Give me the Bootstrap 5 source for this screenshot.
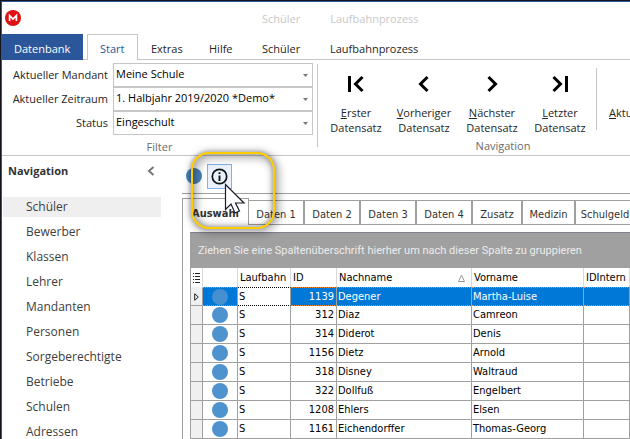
<!DOCTYPE html>
<html lang="de">
<head>
<meta charset="utf-8">
<meta name="viewport" content="width=device-width, initial-scale=1">
<title>Schüler</title>
<link href="https://cdn.jsdelivr.net/npm/bootstrap@5.3.0/dist/css/bootstrap.min.css" rel="stylesheet">
<style>
  :root { --accent: #2b579a; --rule: #c6c6c6; --edge: #a0a0a0; }
  body { font: 11px/15px "Open Sans", "Noto Sans", sans-serif; color: #262626; background: #fff; }
  a { color: inherit; text-decoration: none; }
  .app { border-left: 1px solid #14141c; border-top: 1px solid #14141c; }
  .app-inner { border-left: 1px solid var(--accent); border-top: 1px solid var(--accent); }
  .titlebar { height: 32px; color: #c8c8c8; padding-top: 8px; padding-left: 3px; line-height: 18px; }
  .title-a { margin-left: 241px; }
  .title-b { margin-left: 30px; }
  /* ribbon tabs */
  .ribbon-tabs { height: 26px; border-bottom: 1px solid var(--rule); }
  .ribbon-tabs .nav-link { color: #262626; padding: 7px 13px; height: 26px; width: 54px; white-space: nowrap; }
  .ribbon-tabs .file-tab { background: var(--accent); color: #fff; width: 81px; margin-right: 4px; padding: 7px 12px; }
  .ribbon-tabs .nav-link.active { color: var(--accent); background: #fff; border: 1px solid var(--rule); border-bottom: 0; width: 51px; padding: 6px 12px; }
  .ribbon-tabs .wide-tab { width: 68px; padding: 7px 12px; }
  /* ribbon body */
  .ribbon { height: 96px; border-bottom: 1px solid var(--rule); }
  .filter-group { width: 315px; padding: 3px 4px 0 0; }
  .filter-row { height: 24px; gap: 5px; }
  .filter-row label { padding-bottom: 2px; }
  .filter-row .form-select { --bs-form-select-bg-img: none; width: 200px; height: 24px; padding: 0 20px 2px 2px; font-size: 11px; line-height: 18px; color: #000; border: 1px solid var(--rule); border-radius: 0;
    background: #fff url("data:image/svg+xml,%3Csvg xmlns='http://www.w3.org/2000/svg' viewBox='0 0 5 3'%3E%3Cpath d='M0 0h5L2.500 3z' fill='%23777'/%3E%3C/svg%3E") no-repeat right 4px center / 5px 3px; }
  .group-caption { color: #6b6b6b; line-height: 16px; }
  .divider { width: 1px; background: var(--rule); flex: none; }
  .command-group { width: 370px; padding-top: 8px; }
  .command-row { height: 70px; }
  .nav-buttons { padding: 6px 2px 0 4px; }
  .cmd { width: 68px; padding: 0; border: 0; border-radius: 0; font-size: 11px; line-height: 15px; color: #262626; flex: none; }
  .cmd svg { display: block; margin: 0 auto 11px; }
  .cmd.refresh { margin-left: 12px; padding-top: 37px; text-align: left; }
  /* sidebar */
  .sidebar { width: 180px; padding-top: 7px; flex: none; font-size: 12px; color: #404040; }
  .sidebar h2 { font-size: 11px; line-height: 16px; font-weight: 700; margin: 0; color: #333; }
  .side-head { padding: 0 27px 18px 6px; }
  .sidebar .list-group-item { border: 0; border-radius: 0; height: 20px; margin: 0 21px 5px 1px; padding: 2px 0 2px 23px; line-height: 16px; color: #404040; background: transparent; }
  .sidebar .list-group-item.active { background: #efefef; }
  /* main area */
  .workspace { min-width: 0; }
  .tools { height: 38px; border-bottom: 1px solid var(--edge); padding: 8px 0 0 4px; }
  .dot { display: block; width: 16px; height: 16px; border-radius: 50%; background: #4e93cd; margin: 0 auto; }
  .tool-dot { background: #4683b7; margin: 0; }
  .info-btn { width: 25px; height: 25px; border: 1px solid #7fb0e6; background: #e9f2fc; padding: 0; border-radius: 0; margin-left: 5px; line-height: 0; }
  .page-tabs { height: 27px; margin-top: 4px; font: 11px/13px "DejaVu Sans Condensed", "DejaVu Sans", sans-serif; }
  .page-tabs .nav-link { flex: none; height: 25px; margin-top: 2px; padding: 7px 0 0; width: 56px; text-align: center; color: #333; border: 1px solid var(--edge); border-left-width: 0; border-right-width: 2px; white-space: nowrap; }
  .page-tabs .nav-link.active { width: 67px; height: 27px; margin: 0; padding: 8px 0 0 9px; text-align: left; background: #fff; border-left-width: 1px; border-right-width: 1px; border-bottom: 0; font-weight: 700; }
  .page-tabs .w-50px { width: 50px; }
  .page-tabs .w-53px { width: 53px; }
  .page-tabs .w-60px { width: 60px; }
  .sheet { border-left: 1px solid var(--edge); padding: 7px 0 0 7px; }
  .grid-box { border-left: 1px solid var(--edge); border-top: 1px solid #808090; font: 11px/14px "DejaVu Sans Condensed", "DejaVu Sans", sans-serif; color: #000; }
  .group-panel { height: 35px; background: var(--edge); color: #ececec; padding: 11px 7px; white-space: nowrap; font-family: Roboto, sans-serif; }
  .records { table-layout: fixed; width: 100%; border-collapse: separate; border-spacing: 0; white-space: nowrap; }
  .records th { height: 19px; padding: 0 2px; font-weight: 400; border-right: 1px solid #d8d8d8; }
  .records td { height: 19px; padding: 0 1px; border-right: 1px solid var(--edge); border-bottom: 1px solid var(--edge); }
  .records td:first-child { background: #f0f0f0; }
  .records .num { text-align: right; padding-right: 2px; }
  .records tr.current td { background: #0078d7; color: #fff; border-bottom: 1px dotted #f28728; border-top: 1px dotted #f28728; }
  .records tr.current td:first-child { background: #f0f0f0; border-top-color: transparent; border-bottom: 1px solid var(--edge); line-height: 0; }
  .records tr.current td.focused { background: #fff; color: #000; border-top-color: #000; border-bottom-color: #000; }
  .records tr.current .dot { background: #4590d0; }
  /* highlight ring and pointer lie over the page */
  .ring { position: absolute; left: 190px; top: 151px; width: 84px; height: 77px; border: 2px solid #fc0; border-radius: 18px; filter: drop-shadow(0 0 2px rgba(0,0,0,.45)) drop-shadow(2px 2px 4px rgba(0,0,0,.8)); pointer-events: none; }
  .pointer { position: absolute; left: 223px; top: 182px; pointer-events: none; }
</style>
<script src="https://cdn.jsdelivr.net/npm/bootstrap@5.3.0/dist/js/bootstrap.bundle.min.js"></script>
</head>
<body>
<div class="app vh-100 overflow-hidden position-relative">
<div class="app-inner h-100 d-flex flex-column">
  <header class="titlebar d-flex align-items-start flex-shrink-0">
    <svg width="16" height="16" viewBox="0 0 16 16" aria-hidden="true"><circle cx="8" cy="8" r="8" fill="#e01014"/><path d="M4.600 11V5.600L8 9l3.400-3.400V11" fill="none" stroke="#fff" stroke-width="1.700"/></svg>
    <span class="title-a">Schüler</span><span class="title-b">Laufbahnprozess</span>
  </header>
  <nav class="ribbon-tabs nav flex-nowrap flex-shrink-0">
    <a class="nav-link file-tab" href="#">Datenbank</a>
    <a class="nav-link active" href="#">Start</a>
    <a class="nav-link" href="#">Extras</a>
    <a class="nav-link ms-1" href="#">Hilfe</a>
    <a class="nav-link wide-tab" href="#">Schüler</a>
    <a class="nav-link wide-tab" href="#">Laufbahnprozess</a>
  </nav>
  <section class="ribbon d-flex flex-shrink-0">
    <div class="filter-group flex-shrink-0">
      <div class="filter-row d-flex align-items-center justify-content-end"><label for="mandant">Aktueller Mandant</label><select class="form-select" id="mandant"><option>Meine Schule</option></select></div>
      <div class="filter-row d-flex align-items-center justify-content-end"><label for="zeitraum">Aktueller Zeitraum</label><select class="form-select" id="zeitraum"><option>1. Halbjahr 2019/2020 *Demo*</option></select></div>
      <div class="filter-row d-flex align-items-center justify-content-end"><label for="status">Status</label><select class="form-select" id="status"><option>Eingeschult</option></select></div>
      <div class="group-caption text-center mt-1 ps-1">Filter</div>
    </div>
    <div class="divider mt-1 mb-2"></div>
    <div class="command-group flex-shrink-0">
      <div class="command-row d-flex align-items-start">
        <div class="nav-buttons d-flex flex-shrink-0">
          <button type="button" class="btn cmd"><svg width="20" height="20" viewBox="0 0 20 20"><path d="M3.500 2v16M16.500 3l-7 7 7 7" fill="none" stroke="#000" stroke-width="3"/></svg><u>E</u>rster<br>Datensatz</button>
          <button type="button" class="btn cmd"><svg width="20" height="20" viewBox="0 0 20 20"><path d="M13.500 3l-7 7 7 7" fill="none" stroke="#000" stroke-width="3"/></svg><u>V</u>orheriger<br>Datensatz</button>
          <button type="button" class="btn cmd"><svg width="20" height="20" viewBox="0 0 20 20"><path d="M6.500 3l7 7-7 7" fill="none" stroke="#000" stroke-width="3"/></svg><u>N</u>ächster<br>Datensatz</button>
          <button type="button" class="btn cmd"><svg width="20" height="20" viewBox="0 0 20 20"><path d="M16.500 2v16M3.500 3l7 7-7 7" fill="none" stroke="#000" stroke-width="3"/></svg><u>L</u>etzter<br>Datensatz</button>
        </div>
        <div class="divider align-self-stretch mb-2"></div>
        <button type="button" class="btn cmd refresh"><u>A</u>ktualisieren</button>
      </div>
      <div class="group-caption text-center">Navigation</div>
    </div>
  </section>
  <div class="d-flex flex-grow-1">
    <aside class="sidebar">
      <div class="side-head d-flex justify-content-between align-items-center"><h2>Navigation</h2><svg width="8" height="10" viewBox="0 0 8 10"><path d="M6.500 1L2 5l4.500 4" fill="none" stroke="#777" stroke-width="2"/></svg></div>
      <div class="list-group">
        <a class="list-group-item active" href="#">Schüler</a>
        <a class="list-group-item" href="#">Bewerber</a>
        <a class="list-group-item" href="#">Klassen</a>
        <a class="list-group-item" href="#">Lehrer</a>
        <a class="list-group-item" href="#">Mandanten</a>
        <a class="list-group-item" href="#">Personen</a>
        <a class="list-group-item" href="#">Sorgeberechtigte</a>
        <a class="list-group-item" href="#">Betriebe</a>
        <a class="list-group-item" href="#">Schulen</a>
        <a class="list-group-item" href="#">Adressen</a>
      </div>
    </aside>
    <main class="workspace flex-grow-1 d-flex flex-column">
      <div class="tools d-flex flex-shrink-0">
        <span class="dot tool-dot mt-1"></span>
        <button type="button" class="btn info-btn" aria-label="Info"><svg width="17" height="17" viewBox="0 0 17 17"><circle cx="8.500" cy="8.500" r="7.200" fill="none" stroke="#111" stroke-width="1.700"/><path d="M8.500 7.500V13M8.500 4.200v1.900" stroke="#111" stroke-width="1.900"/></svg></button>
      </div>
      <nav class="page-tabs nav flex-nowrap flex-shrink-0">
        <a class="nav-link active" href="#">Auswahl</a>
        <a class="nav-link" href="#">Daten 1</a>
        <a class="nav-link" href="#">Daten 2</a>
        <a class="nav-link" href="#">Daten 3</a>
        <a class="nav-link" href="#">Daten 4</a>
        <a class="nav-link w-50px" href="#">Zusatz</a>
        <a class="nav-link w-53px" href="#">Medizin</a>
        <a class="nav-link w-60px" href="#">Schulgeld</a>
      </nav>
      <div class="sheet flex-grow-1">
        <div class="grid-box">
          <div class="group-panel">Ziehen Sie eine Spaltenüberschrift hierher um nach dieser Spalte zu gruppieren</div>
          <table class="records">
            <colgroup><col style="width:12px"><col style="width:35px"><col style="width:53px"><col style="width:46px"><col style="width:135px"><col style="width:112px"><col></colgroup>
            <thead><tr>
              <th><svg class="d-block" width="8" height="10" viewBox="0 0 8 10"><path d="M0 .5h1M0 3.500h1M0 6.500h1M0 9.500h1M2 .5h5M2 3.500h5M2 6.500h5M2 9.500h5" stroke="#222"/></svg></th>
              <th></th><th>Laufbahn</th><th>ID</th>
              <th><span class="d-flex justify-content-between align-items-center">Nachname<svg class="me-1" width="7" height="8" viewBox="0 0 7 8"><path d="M3.500 1L6.500 7.500H.5z" fill="none" stroke="#999"/></svg></span></th>
              <th>Vorname</th><th>IDIntern</th>
            </tr></thead>
            <tbody>
              <tr class="current"><td><svg class="d-block mx-auto" width="5" height="8" viewBox="0 0 5 8"><path d="M.7.7L4.300 4 .7 7.300z" fill="none" stroke="#222"/></svg></td><td><span class="dot"></span></td><td class="focused">S</td><td class="num">1139</td><td>Degener</td><td>Martha-Luise</td><td></td></tr>
              <tr><td></td><td><span class="dot"></span></td><td>S</td><td class="num">312</td><td>Diaz</td><td>Camreon</td><td></td></tr>
              <tr><td></td><td><span class="dot"></span></td><td>S</td><td class="num">314</td><td>Diderot</td><td>Denis</td><td></td></tr>
              <tr><td></td><td><span class="dot"></span></td><td>S</td><td class="num">1156</td><td>Dietz</td><td>Arnold</td><td></td></tr>
              <tr><td></td><td><span class="dot"></span></td><td>S</td><td class="num">318</td><td>Disney</td><td>Waltraud</td><td></td></tr>
              <tr><td></td><td><span class="dot"></span></td><td>S</td><td class="num">322</td><td>Dollfuß</td><td>Engelbert</td><td></td></tr>
              <tr><td></td><td><span class="dot"></span></td><td>S</td><td class="num">1208</td><td>Ehlers</td><td>Elsen</td><td></td></tr>
              <tr><td></td><td><span class="dot"></span></td><td>S</td><td class="num">1161</td><td>Eichendorffer</td><td>Thomas-Georg</td><td></td></tr>
            </tbody>
          </table>
        </div>
      </div>
    </main>
  </div>
</div>
<div class="ring"></div>
<svg class="pointer" width="22" height="32" viewBox="0 0 22 32" aria-hidden="true"><path d="M1.500 1.500v25l5.500-5.500 4 9 4.500-2-4-8H20z" fill="#fff" stroke="#1b1b28" stroke-width="1.200"/></svg>
</div>
</body>
</html>
